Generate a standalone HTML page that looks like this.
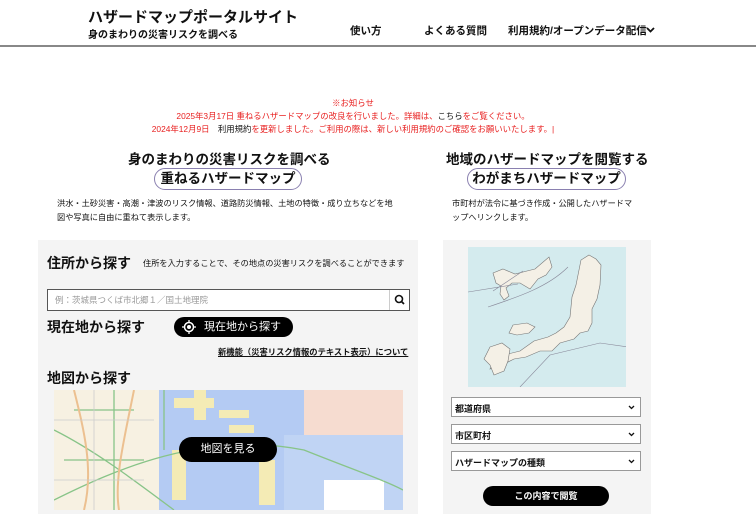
<!DOCTYPE html><html><head><meta charset="utf-8"><style>
*{margin:0;padding:0;box-sizing:border-box}
body{width:756px;height:514px;overflow:hidden;background:#fff;font-family:"Liberation Sans","Noto Sans CJK JP",sans-serif;color:#111;position:relative}
.a{position:absolute;white-space:nowrap}
.sel{position:absolute;left:451px;width:190px;height:20px;background:#fff;border:1px solid #999;font-size:9px;padding:4px 3px;font-weight:bold}
.sel svg{position:absolute;right:5px;top:7px}
</style></head><body>
<div class="a" style="left:88px;top:6px;font-size:15px;font-weight:bold">ハザードマップポータルサイト</div>
<div class="a" style="left:88px;top:26px;font-size:10px;font-weight:bold">身のまわりの災害リスクを調べる</div>
<div class="a" style="left:350px;top:23px;font-size:10.5px;font-weight:bold">使い方</div>
<div class="a" style="left:424px;top:23px;font-size:10.5px;font-weight:bold">よくある質問</div>
<div class="a" style="left:508px;top:23px;font-size:10.5px;font-weight:bold">利用規約/オープンデータ配信</div>
<svg class="a" style="left:646px;top:26px" width="9" height="8"><path d="M1 2l3.5 3.5L8 2" stroke="#111" stroke-width="1.8" fill="none"/></svg>
<div class="a" style="left:0;top:45px;width:756px;height:2px;background:#888"></div>
<div class="a" style="left:0;width:706px;top:97px;text-align:center;font-size:8.4px;color:#e82020;line-height:13px">※お知らせ<br>2025年3月17日 重ねるハザードマップの改良を行いました。詳細は、<span style="color:#111">こちら</span>をご覧ください。<br>2024年12月9日　<span style="color:#111">利用規約</span>を更新しました。ご利用の際は、新しい利用規約のご確認をお願いいたします。|</div>
<div class="a" style="left:128px;top:148px;font-size:13.5px;font-weight:bold">身のまわりの災害リスクを調べる</div>
<div class="a" style="left:154px;top:168px;width:148px;height:22px;border:1px solid #8a80b0;border-radius:11px;text-align:center;font-size:13.5px;font-weight:bold;line-height:20px">重ねるハザードマップ</div>
<div class="a" style="left:57px;top:197px;font-size:8.2px;line-height:14px">洪水・土砂災害・高潮・津波のリスク情報、道路防災情報、土地の特徴・成り立ちなどを地<br>図や写真に自由に重ねて表示します。</div>
<div class="a" style="left:446px;top:148px;font-size:13.5px;font-weight:bold">地域のハザードマップを閲覧する</div>
<div class="a" style="left:467px;top:168px;width:159px;height:22px;border:1px solid #8a80b0;border-radius:11px;text-align:center;font-size:13.5px;font-weight:bold;line-height:20px">わがまちハザードマップ</div>
<div class="a" style="left:452px;top:197px;font-size:8.2px;line-height:14px">市町村が法令に基づき作成・公開したハザードマ<br>ップへリンクします。</div>

<div class="a" style="left:38px;top:240px;width:380px;height:274px;background:#f4f4f4"></div>
<div class="a" style="left:47px;top:253px;font-size:14px;font-weight:bold">住所から探す</div>
<div class="a" style="left:143px;top:257px;font-size:8.2px">住所を入力することで、その地点の災害リスクを調べることができます</div>
<div class="a" style="left:47px;top:289px;width:363px;height:22px;background:#fff;border:1px solid #555;font-size:8.5px;color:#999;padding:4px 7px">例：茨城県つくば市北郷１／国土地理院</div>
<div class="a" style="left:389px;top:290px;width:20px;height:20px;border-left:1px solid #ccc"><svg width="20" height="20"><circle cx="9" cy="9" r="3.5" fill="none" stroke="#111" stroke-width="1.6"/><path d="M11.5 11.5L14 14" stroke="#111" stroke-width="1.8"/></svg></div>
<div class="a" style="left:47px;top:317px;font-size:14px;font-weight:bold">現在地から探す</div>
<div class="a" style="left:174px;top:317px;width:119px;height:20px;background:#000;border-radius:10px;color:#fff;font-size:11px;line-height:20px;padding-left:30px">現在地から探す<svg style="position:absolute;left:8px;top:3px" width="14" height="14"><circle cx="7" cy="7" r="4.5" fill="none" stroke="#fff" stroke-width="1.5"/><circle cx="7" cy="7" r="2" fill="#fff"/><path d="M7 0v2.5M7 11.5v2.5M0 7h2.5M11.5 7h2.5" stroke="#fff" stroke-width="1.3"/></svg></div>
<div class="a" style="left:218px;top:346px;font-size:8.3px;font-weight:bold;text-decoration:underline">新機能（災害リスク情報のテキスト表示）について</div>
<div class="a" style="left:47px;top:368px;font-size:14px;font-weight:bold">地図から探す</div>
<div class="a" style="left:54px;top:390px;width:349px;height:120px;overflow:hidden;background:#f7f1e2">
<svg width="349" height="120">
<rect x="240" y="0" width="109" height="55" fill="#f6dcd0"/>
<path d="M105 0h145v45h-15v75H105z" fill="#b4cbf3"/>
<path d="M230 45h119v75H230z" fill="#c0d4f4"/>
<path d="M120 8h40v10h-40zM165 20h30v8h-30zM118 60h14v50h-14zM205 70h16v45h-16zM140 0h12v30h-12zM175 35h25v8h-25z" fill="#f4ebb5"/>
<path d="M270 90h60v30h-60z" fill="#fff"/>
<path d="M0 40C40 60 80 90 120 120M0 110C60 80 150 40 250 60C300 80 330 90 349 100M60 0v120M110 0v60M20 20h60M10 70h80" stroke="#88c488" stroke-width="1.3" fill="none"/>
<path d="M20 0C30 40 40 80 30 120M80 0C70 50 60 90 65 120" stroke="#ecc090" stroke-width="2" fill="none"/>
<path d="M0 30h100M0 90h90M40 0v120" stroke="#ccc" stroke-width=".8" fill="none"/>
</svg>
<div class="a" style="left:125px;top:47px;width:98px;height:25px;background:#000;border-radius:13px;color:#fff;font-size:11px;line-height:25px;text-align:center">地図を見る</div>
</div>

<div class="a" style="left:443px;top:240px;width:208px;height:274px;background:#f4f4f4"></div>
<div class="a" style="left:468px;top:247px;width:158px;height:140px;background:#d4ebee;overflow:hidden">
<svg width="158" height="140">
<path d="M35 22l12 5 12-3 8-2 14-12 3 10-6 8-8 4-8 10-10-6-8 0-6 5 3 8-5 4-4-6 1-8-5-3-3-10z" fill="#f4f0e6" stroke="#777" stroke-width=".6"/>
<path d="M121 8l7 4 5 6-1 20-3 14-5 10 0 14-4 8-8 2-6 6-14 4-8 8-12 0-14 6-12 2-12 6-12 4 4-8 10-6 16-4 14-10 14-4 8-4 8-6 6-10 2-20 4-12 3-15 2-10z" fill="#f4f0e6" stroke="#777" stroke-width=".6"/>
<path d="M45 78l14-2 8 4-6 6-12 2-8-2zM22 100l12-4 8 6-2 12-4 10-10 4-4-10-6-6z" fill="#f4f0e6" stroke="#777" stroke-width=".6"/>
<path d="M25 44l30-20M20 60C50 50 80 40 100 20M0 45l50-8M52 140l30-32 50-12 35 5" stroke="#889" stroke-width=".6" fill="none"/>
</svg></div>
<div class="sel" style="top:397px">都道府県<svg width="7" height="5"><path d="M1 1l2.5 2.5L6 1" stroke="#111" stroke-width="1.3" fill="none"/></svg></div>
<div class="sel" style="top:424px">市区町村<svg width="7" height="5"><path d="M1 1l2.5 2.5L6 1" stroke="#111" stroke-width="1.3" fill="none"/></svg></div>
<div class="sel" style="top:451px">ハザードマップの種類<svg width="7" height="5"><path d="M1 1l2.5 2.5L6 1" stroke="#111" stroke-width="1.3" fill="none"/></svg></div>
<div class="a" style="left:483px;top:486px;width:126px;height:20px;background:#000;border-radius:10px;color:#fff;font-size:9px;font-weight:bold;line-height:20px;text-align:center">この内容で閲覧</div>
</body></html>
